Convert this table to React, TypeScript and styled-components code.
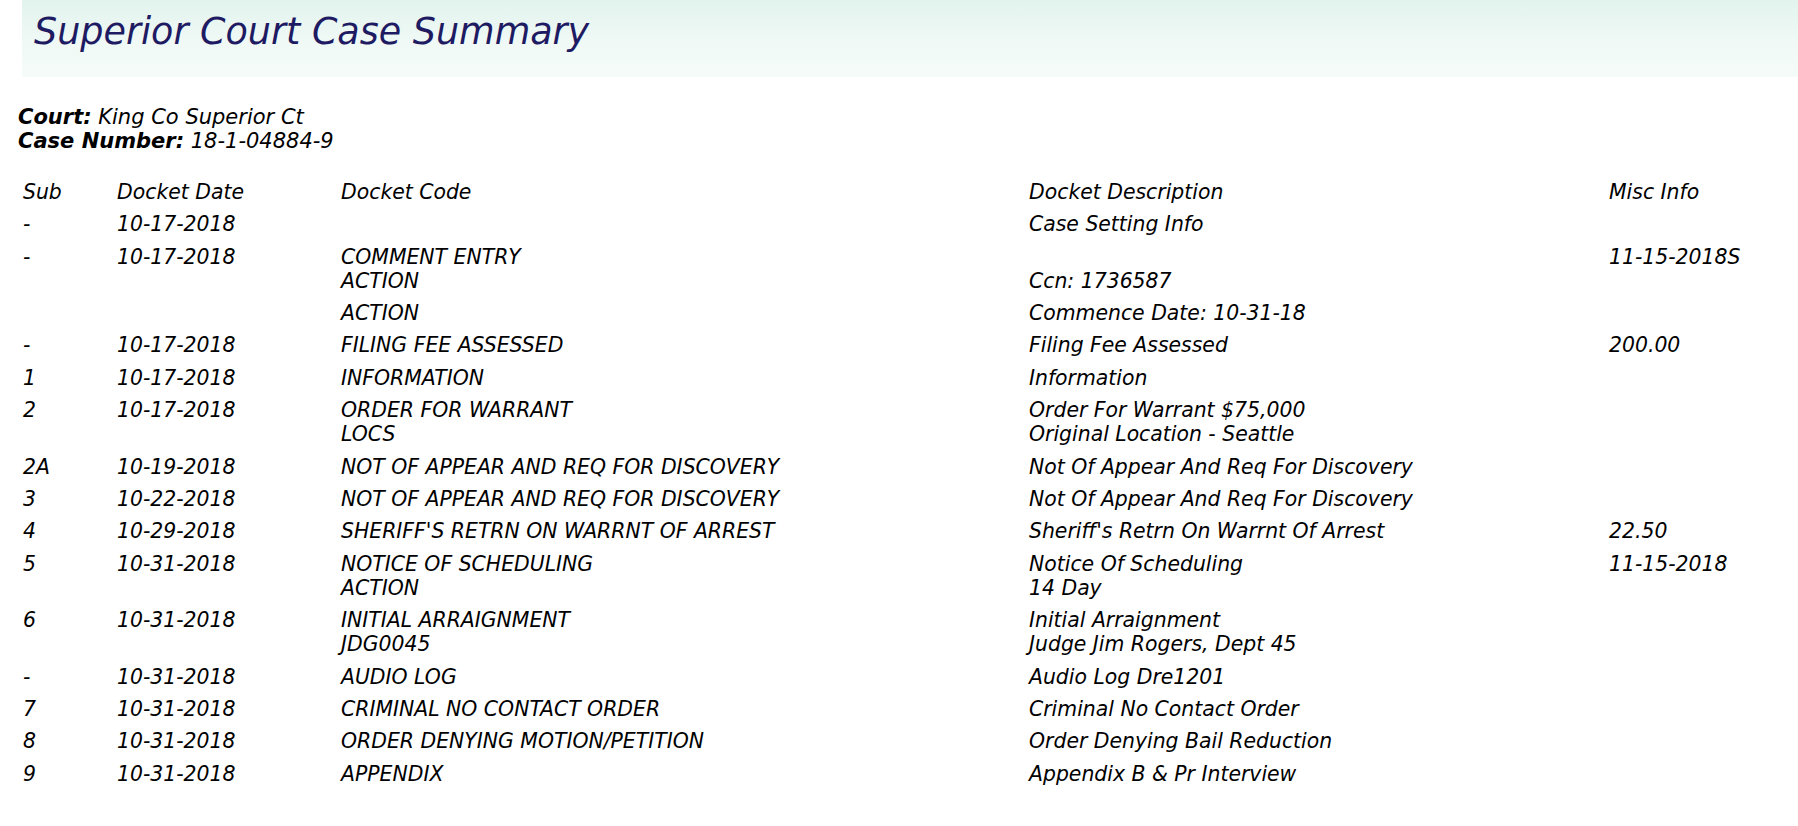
import React, { FC } from "react";
import styled, { createGlobalStyle } from "styled-components";

const GlobalStyle = createGlobalStyle`
  html, body {
    margin: 0;
    padding: 0;
    background: #ffffff;
  }
  body {
    font-family: "DejaVu Sans", Verdana, sans-serif;
    color: #000000;
  }
`;

const Header = styled.div`
  margin-left: 22px;
  height: 77px;
  box-sizing: border-box;
  padding: 10px 0 0 12px;
  background: linear-gradient(180deg, #e2f3ed 0%, #f0f9f6 55%, #f5fbf9 100%);
`;

const Title = styled.h1`
  margin: 0;
  font-size: 36.5px;
  line-height: 44px;
  font-weight: normal;
  font-style: italic;
  color: #1e1b62;
`;

const CaseInfo = styled.div`
  padding: 28px 0 0 18px;
  font-size: 21px;
  line-height: 24px;
  font-style: italic;
`;

const Label = styled.b`
  font-weight: bold;
`;

const Docket = styled.div`
  margin-top: 23px;
  padding-left: 23px;
  font-size: 20.4px;
  line-height: 24.3px;
  font-style: italic;
`;

const Row = styled.div`
  display: grid;
  grid-template-columns: 94px 224px 688px 580px 1fr;
  padding: 4px 0;
`;

const Cell = styled.div`
  white-space: nowrap;
`;

const Line = styled.div`
  min-height: 24.3px;
`;

type Entry = {
  sub: string;
  date: string;
  code: string[];
  desc: string[];
  misc: string;
};

const entries: Entry[] = [
  { sub: "-", date: "10-17-2018", code: [], desc: ["Case Setting Info"], misc: "" },
  {
    sub: "-",
    date: "10-17-2018",
    code: ["COMMENT ENTRY", "ACTION"],
    desc: ["", "Ccn: 1736587"],
    misc: "11-15-2018S",
  },
  { sub: "", date: "", code: ["ACTION"], desc: ["Commence Date: 10-31-18"], misc: "" },
  {
    sub: "-",
    date: "10-17-2018",
    code: ["FILING FEE ASSESSED"],
    desc: ["Filing Fee Assessed"],
    misc: "200.00",
  },
  { sub: "1", date: "10-17-2018", code: ["INFORMATION"], desc: ["Information"], misc: "" },
  {
    sub: "2",
    date: "10-17-2018",
    code: ["ORDER FOR WARRANT", "LOCS"],
    desc: ["Order For Warrant $75,000", "Original Location - Seattle"],
    misc: "",
  },
  {
    sub: "2A",
    date: "10-19-2018",
    code: ["NOT OF APPEAR AND REQ FOR DISCOVERY"],
    desc: ["Not Of Appear And Req For Discovery"],
    misc: "",
  },
  {
    sub: "3",
    date: "10-22-2018",
    code: ["NOT OF APPEAR AND REQ FOR DISCOVERY"],
    desc: ["Not Of Appear And Req For Discovery"],
    misc: "",
  },
  {
    sub: "4",
    date: "10-29-2018",
    code: ["SHERIFF'S RETRN ON WARRNT OF ARREST"],
    desc: ["Sheriff's Retrn On Warrnt Of Arrest"],
    misc: "22.50",
  },
  {
    sub: "5",
    date: "10-31-2018",
    code: ["NOTICE OF SCHEDULING", "ACTION"],
    desc: ["Notice Of Scheduling", "14 Day"],
    misc: "11-15-2018",
  },
  {
    sub: "6",
    date: "10-31-2018",
    code: ["INITIAL ARRAIGNMENT", "JDG0045"],
    desc: ["Initial Arraignment", "Judge Jim Rogers, Dept 45"],
    misc: "",
  },
  { sub: "-", date: "10-31-2018", code: ["AUDIO LOG"], desc: ["Audio Log Dre1201"], misc: "" },
  {
    sub: "7",
    date: "10-31-2018",
    code: ["CRIMINAL NO CONTACT ORDER"],
    desc: ["Criminal No Contact Order"],
    misc: "",
  },
  {
    sub: "8",
    date: "10-31-2018",
    code: ["ORDER DENYING MOTION/PETITION"],
    desc: ["Order Denying Bail Reduction"],
    misc: "",
  },
  {
    sub: "9",
    date: "10-31-2018",
    code: ["APPENDIX"],
    desc: ["Appendix B & Pr Interview"],
    misc: "",
  },
];

const Lines: FC<{ items: string[] }> = ({ items }) => (
  <Cell>
    {items.map((t, i) => (
      <Line key={i}>{t}</Line>
    ))}
  </Cell>
);

const App: FC = () => {
  return (
    <>
      <GlobalStyle />
      <Header>
        <Title>Superior Court Case Summary</Title>
      </Header>
      <CaseInfo>
        <div>
          <Label>Court:</Label> King Co Superior Ct
        </div>
        <div>
          <Label>Case Number:</Label> 18-1-04884-9
        </div>
      </CaseInfo>
      <Docket>
        <Row>
          <Cell>Sub</Cell>
          <Cell>Docket Date</Cell>
          <Cell>Docket Code</Cell>
          <Cell>Docket Description</Cell>
          <Cell>Misc Info</Cell>
        </Row>
        {entries.map((e, i) => (
          <Row key={i}>
            <Cell>{e.sub}</Cell>
            <Cell>{e.date}</Cell>
            <Lines items={e.code} />
            <Lines items={e.desc} />
            <Cell>{e.misc}</Cell>
          </Row>
        ))}
      </Docket>
    </>
  );
};

export default App;
